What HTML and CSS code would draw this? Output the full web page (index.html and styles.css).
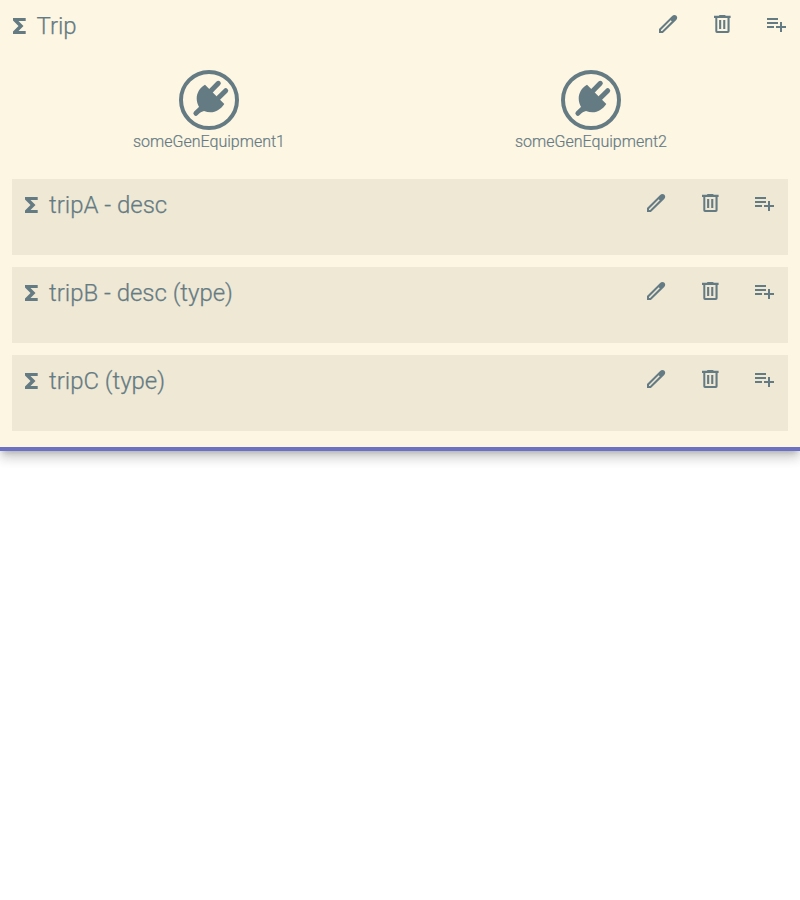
FILE: index.html
```
<!DOCTYPE html>
<html lang="en">
<head>
<meta charset="utf-8">
<title>Trip</title>
<link rel="stylesheet" href="styles.css">
</head>
<body>
<svg class="defs" aria-hidden="true">
  <symbol id="sum" viewBox="0 0 24 24"><path d="M18.7 4H6v2.5l5.5 5.5L6 17.5V20h12.7v-3h-7.2l5-5-5-5h7.2z"/></symbol>
  <symbol id="edit" viewBox="0 0 24 24"><path fill-rule="evenodd" d="M3 17.1 15.9 4.2Q17.1 3 18.5 3q1 0 1.9.8.8.9.8 1.9 0 1.300-1.200 2.500L6.900 21H3zM5 18v1h1.100l9.700-9.700-1.100-1.100z"/></symbol>
  <symbol id="delete" viewBox="0 0 24 24"><path fill-rule="evenodd" d="M9.200 3h6.200v.8h5.200V6h-1v13.200q0 1.800-1.800 1.800H7q-1.700 0-1.700-1.800V6H4V3.800h5.200zM7.300 6v13h10.200V6zM9.100 8h2.100v9H9.100zm4.100 0h2.100v9h-2.100z"/></symbol>
  <symbol id="add" viewBox="0 0 24 24"><path d="M3 6h11v2H3zm0 4h11v2H3zm0 4h7v2H3zm13-4h2v4h4v2h-4v4h-2v-4h-4v-2h4z"/></symbol>
  <symbol id="plug" viewBox="0 0 60 60"><circle cx="30" cy="30" r="28" class="ring"/><path d="M26 14.700 45.300 33.900C42 39 37 42.200 31.500 42.200Q28.300 42.200 25 41L18.900 43.200 20.300 37.400C18.600 34.800 17.700 31.500 17.700 28.500 17.700 23 20.500 18 26 14.700z"/><path class="prong" d="M32 20.700 39.300 13.300M39.300 28 46.700 20.700M23.500 37 16.900 43.300"/></symbol>
</svg>
<main class="pane">
  <header class="bar"><svg class="sum"><use href="#sum"/></svg><h1>Trip</h1><nav><svg><use href="#edit"/></svg><svg><use href="#delete"/></svg><svg><use href="#add"/></svg></nav></header>
  <div class="equipment">
    <figure><svg><use href="#plug"/></svg><figcaption>someGenEquipment1</figcaption></figure>
    <figure><svg><use href="#plug"/></svg><figcaption>someGenEquipment2</figcaption></figure>
  </div>
  <section class="card bar"><svg class="sum"><use href="#sum"/></svg><h2>tripA - desc</h2><nav><svg><use href="#edit"/></svg><svg><use href="#delete"/></svg><svg><use href="#add"/></svg></nav></section>
  <section class="card bar"><svg class="sum"><use href="#sum"/></svg><h2>tripB - desc (type)</h2><nav><svg><use href="#edit"/></svg><svg><use href="#delete"/></svg><svg><use href="#add"/></svg></nav></section>
  <section class="card bar"><svg class="sum"><use href="#sum"/></svg><h2>tripC (type)</h2><nav><svg><use href="#edit"/></svg><svg><use href="#delete"/></svg><svg><use href="#add"/></svg></nav></section>
</main>
</body>
</html>
```
FILE: styles.css
```
html { background: #fff; }
body { margin: 0; min-height: 100vh; color: #657b83; font-family: Roboto, sans-serif; font-weight: 300; }
.defs { display: none; }
svg { display: block; fill: currentColor; flex: none; }
.pane { box-sizing: border-box; height: 451px; background: #fdf6e3; border-bottom: 4px solid #6c71c4; box-shadow: 0 8px 10px 0 rgba(0, 0, 0, .11), 0 3px 14px 1px rgba(0, 0, 0, .1), 0 5px 5px -3px rgba(0, 0, 0, .15); }
.bar { display: flex; align-items: flex-start; box-sizing: border-box; }
header.bar { height: 70px; }
h1, h2 { margin: 0; font-size: 24px; font-weight: 300; line-height: 52px; letter-spacing: -.02px; -webkit-text-stroke: .25px currentColor; }
.sum { width: 24px; height: 24px; margin: 14px 6px 0 7px; }
header .sum { margin-right: 5.5px; }
nav { display: flex; gap: 30px; margin-left: auto; padding: 12px 12px 0 0; }
nav svg { width: 24px; height: 24px; }
.equipment { display: grid; grid-template-columns: 1fr 1fr; gap: 12px; height: 109px; padding: 0 24px; }
figure { margin: 0; display: flex; flex-direction: column; align-items: center; }
figure svg { width: 60px; height: 60px; }
figcaption { font-size: 16px; line-height: 24px; -webkit-text-stroke: .2px currentColor; }
.ring { fill: none; stroke: currentColor; stroke-width: 4; }
.prong { fill: none; stroke: currentColor; stroke-width: 5; stroke-linecap: round; }
.card { height: 76px; margin: 0 12px 12px; background: #eee8d5; }
```
